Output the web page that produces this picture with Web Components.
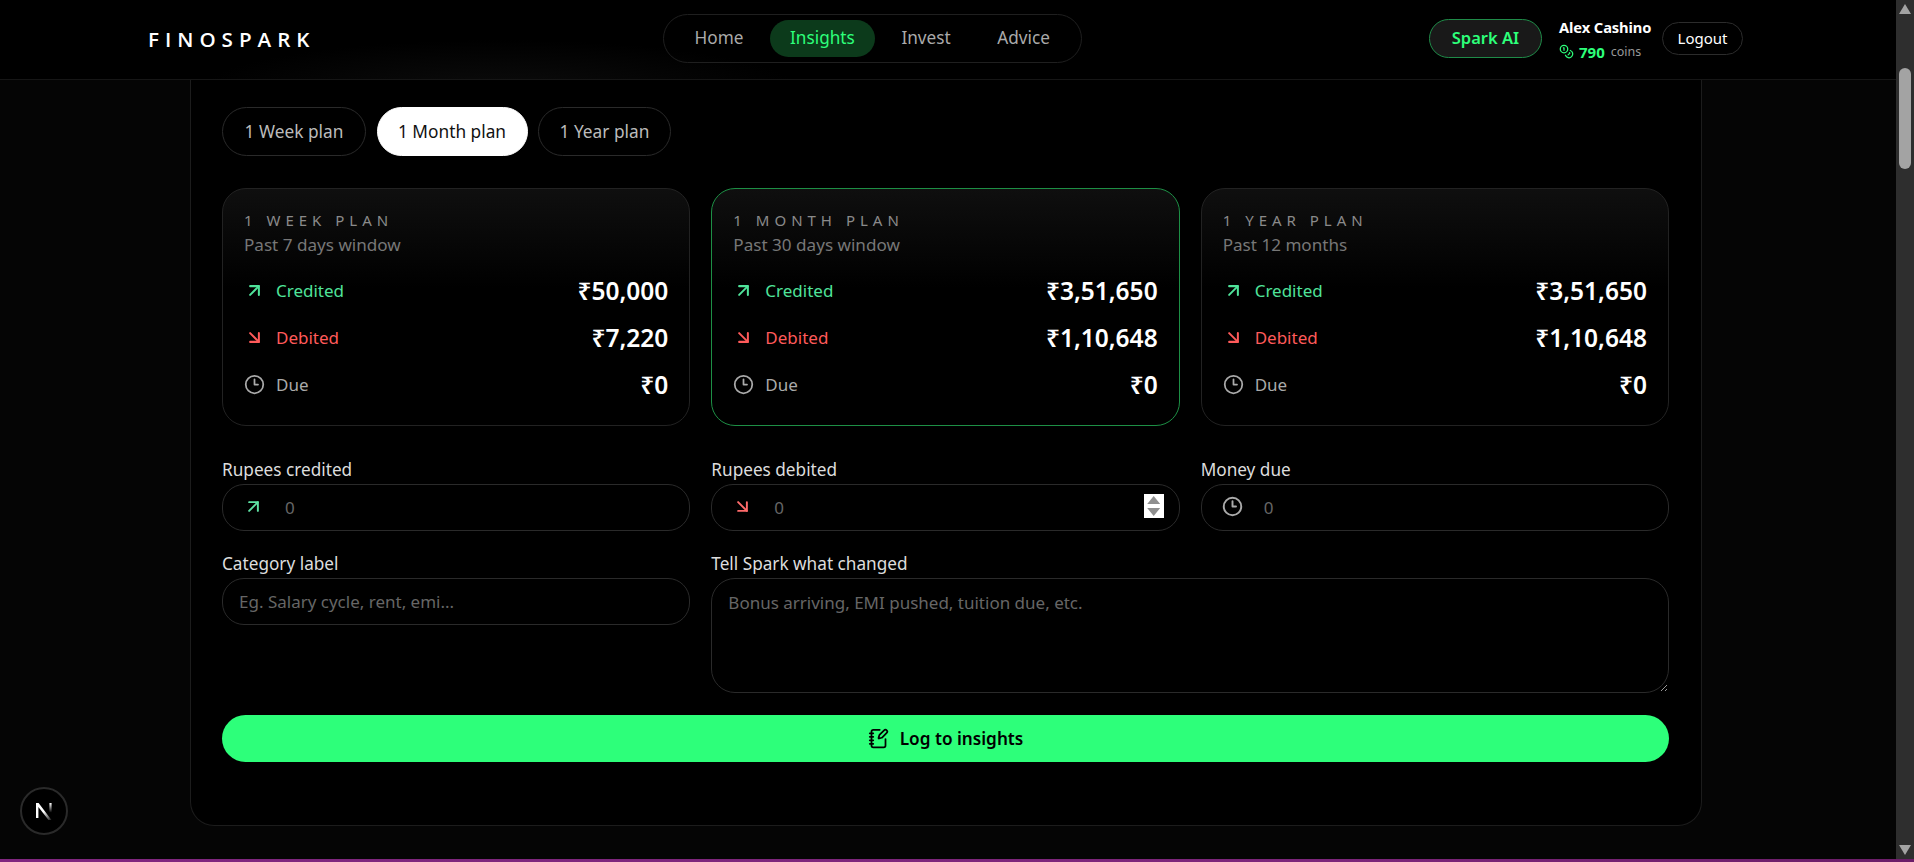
<!DOCTYPE html>
<html lang="en"><head><meta charset="utf-8"><title>FinoSpark</title>
<style>
html,body{margin:0;padding:0;height:862px;overflow:hidden;background:#050505;}
body{font-family:"Noto Sans","Open Sans",sans-serif;color:#fff;}
</style></head>
<body>
<fs-app></fs-app>
<script>
const ICONS={
 up:'<path d="M7 7h10v10"/><path d="M7 17 17 7"/>',
 down:'<path d="m7 7 10 10"/><path d="M17 7v10H7"/>',
 clock:'<circle cx="12" cy="12" r="10"/><path d="M12 6v6h4"/>',
 coins:'<circle cx="8" cy="8" r="6"/><path d="M18.09 10.37A6 6 0 1 1 10.34 18"/><path d="M7 6h1v4"/><path d="m16.71 13.88.7.71-2.82 2.82"/>',
 pen:'<path d="M13.4 2H6a2 2 0 0 0-2 2v16a2 2 0 0 0 2 2h12a2 2 0 0 0 2-2v-7.4"/><path d="M2 6h4"/><path d="M2 10h4"/><path d="M2 14h4"/><path d="M2 18h4"/><path d="M21.378 5.626a1 1 0 1 0-3.004-3.004l-5.01 5.012a2 2 0 0 0-.506.854l-.837 2.87a.5.5 0 0 0 .62.62l2.87-.837a2 2 0 0 0 .854-.506z"/>'
};
function define(name,css,html,init){
  customElements.define(name,class extends HTMLElement{
    connectedCallback(){
      if(this.shadowRoot)return;
      const r=this.attachShadow({mode:'open'});
      r.innerHTML='<style>'+css+'</style>'+(typeof html==='function'?html(this):html);
      if(init)init(this,r);
    }
  });
}
define('fs-icon',`:host{display:inline-flex;flex:none;width:var(--s,21px);height:var(--s,21px)}svg{width:100%;height:100%;fill:none;stroke:currentColor;stroke-width:var(--w,2);stroke-linecap:round;stroke-linejoin:round;display:block}`,
 h=>`<svg viewBox="0 0 24 24" aria-hidden="true">${ICONS[h.getAttribute('name')]}</svg>`);

define('fs-app',`:host{display:flex;flex-direction:column;height:862px;overflow:hidden;position:relative}
 .row{display:flex;flex:1;min-height:0}
 .main{flex:1;min-width:0;display:flex;flex-direction:column}
 .edge{height:3px;flex:none;background:linear-gradient(90deg,#80267f,#7c257a 70%,#6b1d68)}
 `,`<div class="row"><div class="main"><fs-header></fs-header><fs-content></fs-content></div><fs-scrollbar></fs-scrollbar></div><div class="edge"></div><fs-dev-badge></fs-dev-badge>`);

define('fs-scrollbar',`:host{display:flex;flex-direction:column;align-items:center;width:18px;flex:none;background:#2e2e2e}
 .up,.down{width:12px;height:10px;background:#a3a3a3}
 .up{margin-top:4px;clip-path:polygon(50% 0,100% 100%,0 100%)}
 .thumb{width:12px;height:101px;border-radius:6px;background:#a3a3a3;margin-top:54px}
 .down{margin-top:auto;margin-bottom:4px;clip-path:polygon(0 0,100% 0,50% 100%)}`,
 `<div class="up"></div><div class="thumb"></div><div class="down"></div>`);

define('fs-header',`:host{display:flex;align-items:center;justify-content:space-between;flex:none;box-sizing:content-box;height:77px;padding:0 153px 2px 148px;border-bottom:1px solid #161616;
  background:radial-gradient(ellipse 300px 50px at 500px 90px,#0c0c0c,transparent),#000}
 .logo{font-size:20.6px;font-weight:600;letter-spacing:6px;color:#fff;font-family:"Open Sans",sans-serif;margin-right:1px}
 .right{display:flex;align-items:center}
 .spark{display:flex;align-items:center;justify-content:center;box-sizing:border-box;width:113px;height:39px;border:1px solid #1f8b48;border-radius:20px;background:#191919;color:#2dff7a;font-size:16.5px;font-weight:600;padding-bottom:2px}
 .user{margin-left:17px;width:103px;display:flex;flex-direction:column;gap:6px}
 .name{font-size:14.7px;font-weight:700;line-height:20px;color:#fff;letter-spacing:-.1px}
 .coins{display:flex;align-items:center;line-height:18px;--s:15px;color:#2dff7a}
 .coins b{font-size:15px;font-weight:700;margin-left:5px}
 .coins span{font-size:12.5px;color:#999;margin-left:6px}
 .logout{display:flex;align-items:center;justify-content:center;box-sizing:border-box;width:81px;height:33px;border:1px solid #2c2c2c;border-radius:17px;font-size:15px;color:#fff;padding-bottom:1px}
 `,`<div class="logo">FINOSPARK</div><fs-nav></fs-nav>
 <div class="right"><div class="spark">Spark AI</div>
 <div class="user"><div class="name">Alex Cashino</div><div class="coins"><fs-icon name="coins"></fs-icon><b>790</b><span>coins</span></div></div>
 <div class="logout">Logout</div></div>`);

define('fs-nav',`:host{display:flex;align-items:center;gap:6px;box-sizing:border-box;height:49px;padding:0 11px 0 10px;border:1px solid #1f1f1f;border-radius:25px}
 a{display:flex;align-items:center;height:37px;padding:0 20.3px 2px;box-sizing:border-box;border-radius:19px;font-size:17.2px;color:#aaa;text-decoration:none}
 a.on{background:#0c3a1b;color:#2dff7a}`,
 `<a>Home</a><a class="on">Insights</a><a>Invest</a><a>Advice</a>`);

define('fs-content',`:host{display:flex;flex-direction:column;align-items:center;flex:1;min-height:0;background:#050505}
 .panel{box-sizing:border-box;width:1512px;margin-right:4px;height:746px;padding:27px 32px 0 31px;border:1px solid #1c1c1c;border-top:0;border-radius:0 0 24px 24px;background:#000;display:flex;flex-direction:column}
 .cards{display:grid;grid-template-columns:repeat(3,1fr);gap:21px;margin-top:32px}
 .form{display:grid;grid-template-columns:repeat(3,1fr);gap:22px 21px;margin-top:33px}
 .wide{grid-column:span 2}
 fs-submit{margin-top:22px}`,
 `<div class="panel"><fs-tabs></fs-tabs>
 <div class="cards">
 <fs-card title="1 WEEK PLAN" sub="Past 7 days window" cr="₹50,000" de="₹7,220" du="₹0"></fs-card>
 <fs-card active title="1 MONTH PLAN" sub="Past 30 days window" cr="₹3,51,650" de="₹1,10,648" du="₹0"></fs-card>
 <fs-card title="1 YEAR PLAN" sub="Past 12 months" cr="₹3,51,650" de="₹1,10,648" du="₹0"></fs-card>
 </div>
 <div class="form">
 <fs-field label="Rupees credited" icon="up" tone="#5fe3a5" value="0"></fs-field>
 <fs-field label="Rupees debited" icon="down" tone="#ff6b6b" value="0" spin></fs-field>
 <fs-field label="Money due" icon="clock" tone="#aaa" value="0"></fs-field>
 <fs-field label="Category label" placeholder="Eg. Salary cycle, rent, emi..."></fs-field>
 <fs-area class="wide" label="Tell Spark what changed" placeholder="Bonus arriving, EMI pushed, tuition due, etc."></fs-area>
 </div>
 <fs-submit>Log to insights</fs-submit></div>`);

define('fs-tabs',`:host{display:flex;gap:10.5px}
 div{display:flex;align-items:center;justify-content:center;box-sizing:border-box;height:49px;border:1px solid #2a2a2a;border-radius:25px;font-size:17.3px;color:#bbb;padding-bottom:1px}
 .on{background:#fff;border-color:#fff;color:#111}`,
 `<div style="width:144px">1 Week plan</div><div class="on" style="width:151px">1 Month plan</div><div style="width:133px">1 Year plan</div>`);

define('fs-card',`:host{display:block;box-sizing:border-box;height:238px;padding:21px 21px 0;border:1px solid #222;border-radius:24px;background:linear-gradient(#0f0f0f,#000 42%)}
 :host([active]){border-color:#1d8f45}
 .t{font-size:15px;line-height:20px;letter-spacing:5px;color:#8a8a8a;white-space:nowrap}
 .s{font-size:17.1px;line-height:24px;margin-top:3px;color:#777}
 .rows{display:flex;flex-direction:column;gap:19px;margin-top:19px}
 .r{display:flex;align-items:center;height:28px}
 .r fs-icon{margin-top:1px}
 .r span{font-size:17px;margin-left:11px;padding-top:1px}
 .r b{margin-left:auto;font-size:24.5px;font-weight:600;color:#fff}
 .c{color:#4fe39a;--w:2.3}.d{color:#ff5a5a;--w:2.3}.e{color:#aaa}`,
 h=>`<div class="t">${h.getAttribute('title')}</div><div class="s">${h.getAttribute('sub')}</div>
 <div class="rows"><div class="r c"><fs-icon name="up"></fs-icon><span>Credited</span><b>${h.getAttribute('cr')}</b></div>
 <div class="r d"><fs-icon name="down"></fs-icon><span>Debited</span><b>${h.getAttribute('de')}</b></div>
 <div class="r e"><fs-icon name="clock"></fs-icon><span>Due</span><b>${h.getAttribute('du')}</b></div></div>`);

define('fs-field',`:host{display:block}
 label{display:block;font-size:17.2px;line-height:25px;color:#ddd;margin-top:-2px;margin-bottom:2px}
 .box{display:flex;align-items:center;box-sizing:border-box;height:47px;border:1px solid #2a2a2a;border-radius:22px;padding:0 16px;position:relative}
 .box fs-icon{margin-left:4px;margin-right:21px;margin-top:-2px;--w:2.2}
 input{flex:1;min-width:0;background:none;border:0;outline:0;padding:0;font:inherit;font-size:17px;color:#fff;height:24px}
 input::placeholder{color:#666;opacity:1}
 .spin{position:absolute;right:15px;top:9px;width:20px;height:24px;background:#fff;display:flex;flex-direction:column;align-items:center;justify-content:space-between;padding:2px 0;box-sizing:border-box}
 .spin i{display:block;width:13px;height:8px;background:#8f8f8f}
 .spin i:first-child{clip-path:polygon(50% 0,100% 100%,0 100%)}
 .spin i:last-child{clip-path:polygon(0 0,100% 0,50% 100%)}`,
 h=>{const ic=h.getAttribute('icon'),p=h.getAttribute('value')||h.getAttribute('placeholder');
 return `<label>${h.getAttribute('label')}</label><div class="box">${ic?`<fs-icon name="${ic}" style="color:${h.getAttribute('tone')}"></fs-icon>`:''}<input placeholder="${p}">${h.hasAttribute('spin')?'<div class="spin"><i></i><i></i></div>':''}</div>`});

define('fs-area',`:host{display:block}
 label{display:block;font-size:17.2px;line-height:25px;color:#ddd;margin-top:-2px;margin-bottom:2px}
 textarea{display:block;box-sizing:border-box;width:100%;height:115px;background:none;border:1px solid #2a2a2a;border-radius:24px;padding:12px 16px;outline:0;font:inherit;font-size:17px;color:#fff;resize:vertical}
 textarea::placeholder{color:#666;opacity:1}`,
 h=>`<label>${h.getAttribute('label')}</label><textarea placeholder="${h.getAttribute('placeholder')}"></textarea>`);

define('fs-submit',`:host{display:flex;align-items:center;justify-content:center;gap:11px;height:47px;border-radius:24px;background:#2dff7a;color:#000;font-size:17.2px;font-weight:600;--s:21px;padding-bottom:1px;box-sizing:border-box}`,
 `<fs-icon name="pen"></fs-icon><slot></slot>`);

define('fs-dev-badge',`:host{position:absolute;left:20px;top:787px;box-sizing:border-box;width:48px;height:48px;border-radius:50%;background:#000;border:2.5px solid #2a2a2a;display:flex;align-items:center;justify-content:center}
 svg{width:24px;height:24px}`,
 `<svg viewBox="0 0 24 24"><defs><linearGradient id="g" x1="0" y1="0" x2="1" y2="1"><stop offset=".5" stop-color="#fff"/><stop offset="1" stop-color="#fff" stop-opacity=".1"/></linearGradient><linearGradient id="k" x1="0" y1="0" x2="0" y2="1"><stop offset="0" stop-color="#fff"/><stop offset=".8" stop-color="#fff" stop-opacity="0"/></linearGradient></defs><path d="M4 4h2.6L19.5 21h-3L6.4 8v11H4z" fill="url(#g)"/><rect x="17.4" y="4" width="2.2" height="12" fill="url(#k)"/></svg>`);
</script>
</body></html>
